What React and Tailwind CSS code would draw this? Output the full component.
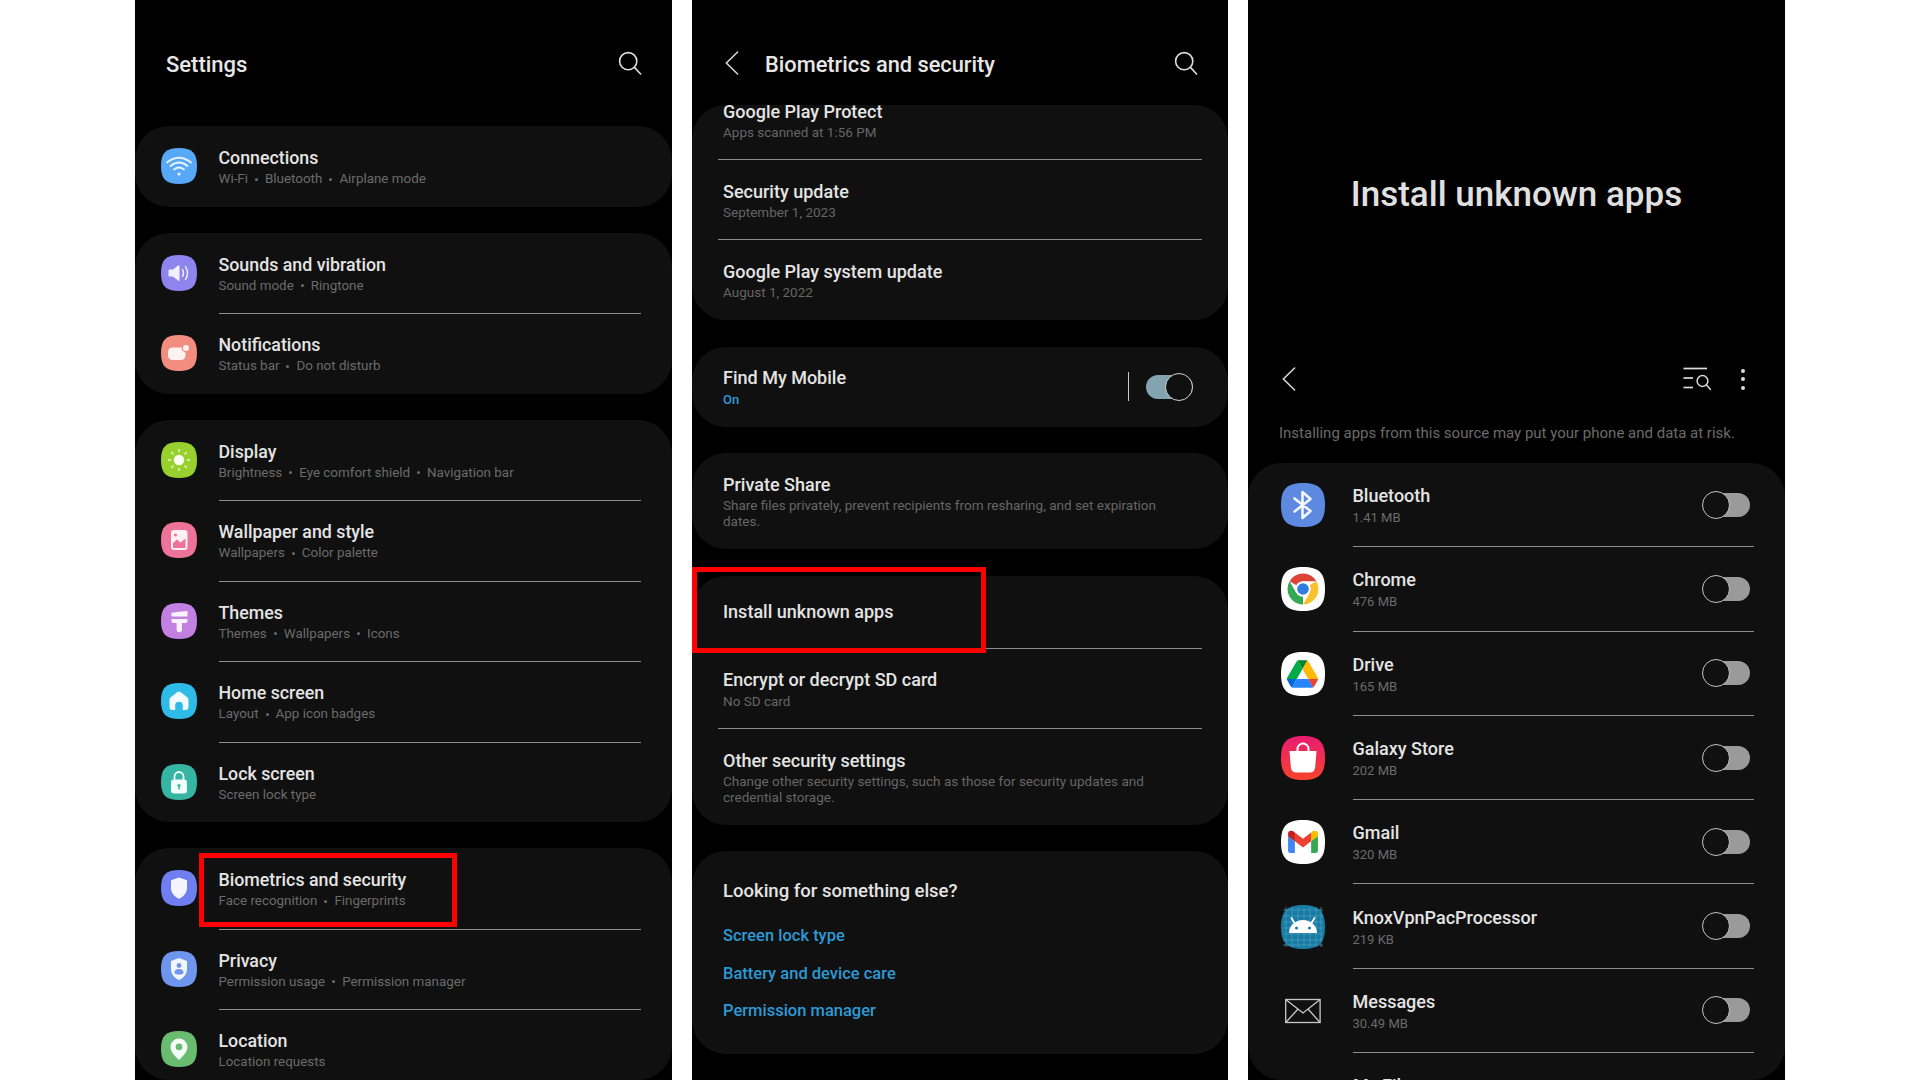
import React from "react";

// squircle used behind every app icon
const SQUIRCLE = "M18 0C31 0 36 5 36 18C36 31 31 36 18 36C5 36 0 31 0 18C0 5 5 0 18 0Z";

const Icon36 = ({ color, children }) => (
  <svg viewBox="0 0 36 36" className="w-[36px] h-[36px] shrink-0">
    <path d={SQUIRCLE} fill={color} />
    {children}
  </svg>
);

const Icon44 = ({ fill, children }) => (
  <svg viewBox="0 0 44 44" className="w-[44px] h-[44px] shrink-0">
    <path d="M22 0C38 0 44 6 44 22C44 38 38 44 22 44C6 44 0 38 0 22C0 6 6 0 22 0Z" fill={fill} />
    {children}
  </svg>
);

const WifiIcon = () => (
  <Icon36 color="#58a8f8">
    <g fill="none" stroke="#e8f3ff" strokeWidth="1.8" strokeLinecap="round">
      <path d="M6 14.5Q18 5 30 14.5" />
      <path d="M9.5 18Q18 11 26.5 18" />
      <path d="M13 21.5Q18 17.5 23 21.5" />
    </g>
    <circle cx="18" cy="26" r="1.6" fill="#e8f3ff" />
  </Icon36>
);

const SoundIcon = () => (
  <Icon36 color="#8e84ee">
    <path d="M7.5 15.5Q7.5 14.5 8.5 14.5H12L17 10.5Q18.5 9.5 18.5 11.5V25Q18.5 26.5 17 25.5L12 21.5H8.5Q7.5 21.5 7.5 20.5Z" fill="#f2f0ff" />
    <g fill="none" stroke="#f2f0ff" strokeWidth="1.4" strokeLinecap="round">
      <path d="M21.5 14.5Q23.5 18 21.5 21.5" />
      <path d="M24.5 11.5Q28.5 18 24.5 24.5" />
    </g>
  </Icon36>
);

const NotifIcon = () => (
  <Icon36 color="#f28d80">
    <rect x="7" y="12.5" width="17.5" height="12.5" rx="4.5" fill="#fff3f1" />
    <circle cx="25" cy="13" r="4.4" fill="#f28d80" />
    <circle cx="25" cy="13" r="3" fill="#fff3f1" />
  </Icon36>
);

const DisplayIcon = () => (
  <Icon36 color="#98d02e">
    <circle cx="18" cy="18" r="5.2" fill="#fbfff0" />
    <g stroke="#eaf8c8" strokeWidth="1.4" strokeLinecap="round">
      <path d="M18 7.5V9.5" />
      <path d="M18 26.5V28.5" />
      <path d="M7.5 18H9.5" />
      <path d="M26.5 18H28.5" />
      <path d="M10.6 10.6L12 12" />
      <path d="M24 24L25.4 25.4" />
      <path d="M25.4 10.6L24 12" />
      <path d="M12 24L10.6 25.4" />
    </g>
  </Icon36>
);

const WallpaperIcon = () => (
  <Icon36 color="#ee7398">
    <rect x="10" y="8" width="16.5" height="20" rx="3" fill="#fff0f4" />
    <circle cx="14.5" cy="13" r="1.6" fill="#ee7398" />
    <path d="M12 26V21L16 17.5L19.5 20.5L24.5 16.5V26Z" fill="#ee7398" />
  </Icon36>
);

const ThemesIcon = () => (
  <Icon36 color="#c180e2">
    <path d="M10.5 9.8Q18 8.8 26.5 8V13.5H10.5Z" fill="#fbf2ff" />
    <path d="M10.5 16H26.5V18Q26.5 20 24.5 20H21V26.5A2.7 2.7 0 0 1 15.6 26.5V20H12.5Q10.5 20 10.5 18Z" fill="#fbf2ff" />
  </Icon36>
);

const HomeIcon = () => (
  <Icon36 color="#2ebbe7">
    <path d="M16.2 9.2Q18 8 19.8 9.2L26.5 14.5Q27.5 15.3 27.5 17V24Q27.5 27 24.5 27H21.8V22.5A3.8 3.8 0 0 0 14.2 22.5V27H11.5Q8.5 27 8.5 24V17Q8.5 15.3 9.5 14.5Z" fill="#f2fcff" />
  </Icon36>
);

const LockIcon = () => (
  <Icon36 color="#36b5a2">
    <path d="M13.5 16V12.5A4.5 4.5 0 0 1 22.5 12.5V16" fill="none" stroke="#effffb" strokeWidth="1.8" />
    <rect x="10" y="15.5" width="16" height="14" rx="3" fill="#effffb" />
    <circle cx="18" cy="21.5" r="1.6" fill="#36b5a2" />
    <rect x="17.3" y="21.5" width="1.4" height="4" fill="#36b5a2" />
  </Icon36>
);

const BioIcon = () => (
  <Icon36 color="#6f7ff2">
    <path d="M18 7.5L26 10.2V18C26 23 22.5 26.8 18 28.8C13.5 26.8 10 23 10 18V10.2Z" fill="#f4f5ff" />
  </Icon36>
);

const PrivacyIcon = () => (
  <Icon36 color="#6f96ee">
    <path d="M18 7L26 10V18C26 23 22.5 27 18 29C13.5 27 10 23 10 18V10Z" fill="#f2f6ff" />
    <circle cx="18" cy="14.5" r="2.4" fill="#6f96ee" />
    <path d="M13.5 21.5Q13.5 18 18 18Q22.5 18 22.5 21.5Q22.5 23.5 18 23.5Q13.5 23.5 13.5 21.5Z" fill="#6f96ee" />
  </Icon36>
);

const LocationIcon = () => (
  <Icon36 color="#69bb6f">
    <path d="M18 7.5A8.5 8.5 0 0 1 26.5 16C26.5 21 21.5 25.5 18 29C14.5 25.5 9.5 21 9.5 16A8.5 8.5 0 0 1 18 7.5Z" fill="#f4fff5" />
    <circle cx="18" cy="15.8" r="3.4" fill="#69bb6f" />
  </Icon36>
);

const BluetoothIcon = () => (
  <Icon44 fill="#5d8ae0">
    <path d="M13.5 15.5L29.5 28L21.5 35V9L29.5 16L13.5 28.5" fill="none" stroke="#f3f6ff" strokeWidth="2.6" strokeLinejoin="round" strokeLinecap="round" />
  </Icon44>
);

const ChromeIcon = () => (
  <Icon44 fill="#ffffff">
    <path d="M8.6 14.25A15.5 15.5 0 0 1 35.4 14.25L22 14.25L22 22Z" fill="#db4437" />
    <path d="M35.4 14.25A15.5 15.5 0 0 1 22 37.5L28.7 25.9L22 22Z" fill="#fbc02d" />
    <path d="M22 37.5A15.5 15.5 0 0 1 8.6 14.25L15.3 25.9L22 22Z" fill="#34a853" />
    <circle cx="22" cy="22" r="7.7" fill="#ffffff" />
    <circle cx="22" cy="22" r="5.8" fill="#2f7de1" />
  </Icon44>
);

const DriveIcon = () => (
  <Icon44 fill="#ffffff">
    <svg x="6" y="8" width="31" height="28" viewBox="0 0 87.3 78">
      <path d="m6.6 66.85 3.85 6.65c.8 1.4 1.95 2.5 3.3 3.3l13.75-23.8h-27.5c0 1.55.4 3.1 1.2 4.5z" fill="#0066da" />
      <path d="m43.65 25-13.75-23.8c-1.35.8-2.5 1.9-3.3 3.3l-25.4 44a9.06 9.06 0 0 0 -1.2 4.5h27.5z" fill="#00ac47" />
      <path d="m73.55 76.8c1.35-.8 2.5-1.9 3.3-3.3l1.6-2.75 7.65-13.25c.8-1.4 1.2-2.95 1.2-4.5h-27.502l5.852 11.5z" fill="#ea4335" />
      <path d="m43.65 25 13.75-23.8c-1.35-.8-2.9-1.2-4.5-1.2h-18.5c-1.6 0-3.15.45-4.5 1.2z" fill="#00832d" />
      <path d="m59.8 53h-32.3l-13.75 23.8c1.35.8 2.9 1.2 4.5 1.2h50.8c1.6 0 3.15-.45 4.5-1.2z" fill="#2684fc" />
      <path d="m73.4 26.5-12.7-22c-.8-1.4-1.95-2.5-3.3-3.3l-13.75 23.8 16.15 28h27.45c0-1.55-.4-3.1-1.2-4.5z" fill="#ffba00" />
    </svg>
  </Icon44>
);

const StoreIcon = () => (
  <svg viewBox="0 0 44 44" className="w-[44px] h-[44px] shrink-0">
    <defs>
      <linearGradient id="storeGrad" x1="0" y1="0" x2="0" y2="1">
        <stop offset="0" stopColor="#e91c72" />
        <stop offset="1" stopColor="#f6432c" />
      </linearGradient>
    </defs>
    <path d="M22 0C38 0 44 6 44 22C44 38 38 44 22 44C6 44 0 38 0 22C0 6 6 0 22 0Z" fill="url(#storeGrad)" />
    <path d="M16.5 15V13A5.5 5.5 0 0 1 27.5 13V15" fill="none" stroke="#fff" strokeWidth="2" />
    <path d="M8.5 15H35.5L34.2 31Q33.8 36.5 28.5 36.5H15.5Q10.2 36.5 9.8 31Z" fill="#fff" />
  </svg>
);

const GmailIcon = () => (
  <Icon44 fill="#ffffff">
    <svg x="7" y="10.5" width="30" height="22.5" viewBox="0 0 256 193">
      <path d="M58.182 192.05V93.14L27.507 65.077 0 49.504v125.091c0 9.658 7.825 17.455 17.455 17.455h40.727Z" fill="#4285f4" />
      <path d="M197.818 192.05h40.727c9.659 0 17.455-7.826 17.455-17.455V49.505l-31.156 17.837-27.026 25.798v98.91Z" fill="#34a853" />
      <path d="m58.182 93.14-4.174-38.647 4.174-36.989L128 69.868l69.818-52.364 4.669 34.992-4.669 40.644L128 145.504z" fill="#ea4335" />
      <path d="M197.818 17.504V93.14L256 49.504V26.231c0-21.585-24.64-33.89-41.89-20.945l-16.292 12.218Z" fill="#fbbc04" />
      <path d="M0 49.504l26.759 20.07L58.182 93.14V17.504L41.89 5.286C24.61-7.66 0 4.646 0 26.23v23.273Z" fill="#c5221f" />
    </svg>
  </Icon44>
);

const KnoxIcon = () => (
  <Icon44 fill="#177ba3">
    <g stroke="#4f9dbd" strokeWidth="0.7">
      {[5, 11, 17, 23, 29, 35, 40].map((v) => (
        <React.Fragment key={v}>
          <path d={`M${v} 2V42`} />
          <path d={`M2 ${v}H42`} />
        </React.Fragment>
      ))}
    </g>
    <path d="M8 28A14 13 0 0 1 36 28Z" fill="#fff" />
    <path d="M13.5 18L10.5 13" stroke="#fff" strokeWidth="1.8" strokeLinecap="round" />
    <path d="M30.5 18L33.5 13" stroke="#fff" strokeWidth="1.8" strokeLinecap="round" />
    <circle cx="15.5" cy="23" r="1.5" fill="#177ba3" />
    <circle cx="28.5" cy="23" r="1.5" fill="#177ba3" />
  </Icon44>
);

const MessagesIcon = () => (
  <svg viewBox="0 0 44 44" className="w-[44px] h-[44px] shrink-0">
    <g fill="none" stroke="#c9c9c9" strokeWidth="1.3">
      <rect x="4.7" y="10.5" width="34.4" height="23" />
      <path d="M4.7 10.5L22 24L39.1 10.5" />
      <path d="M4.7 33.5L17 20" />
      <path d="M39.1 33.5L27 20" />
    </g>
  </svg>
);

const SearchIcon = () => (
  <svg viewBox="0 0 24 24" className="w-[24px] h-[24px]" fill="none" stroke="#dcdcdc" strokeWidth="1.6" strokeLinecap="round">
    <circle cx="10.2" cy="10.2" r="8.6" />
    <path d="M16.4 16.4L22.6 23" />
  </svg>
);

const BackIcon = () => (
  <svg viewBox="0 0 14 24" className="w-[14px] h-[24px]" fill="none" stroke="#d4d4d4" strokeWidth="1.6" strokeLinecap="round">
    <path d="M12.6 1L1.4 12L12.6 23" />
  </svg>
);

const ListSearchIcon = () => (
  <svg viewBox="0 0 28 24" className="w-[28px] h-[24px]" fill="none" stroke="#dcdcdc" strokeWidth="1.7">
    <path d="M0.5 1.5H24" />
    <path d="M0.5 11H10" />
    <path d="M0.5 20.5H10" />
    <circle cx="19.5" cy="14" r="5.4" strokeWidth="1.5" />
    <path d="M23.5 18L27.5 22.5" strokeWidth="1.5" strokeLinecap="round" />
  </svg>
);

const Toggle = ({ on }) => (
  <div className={on ? "relative w-[47px] h-[24px] rounded-full bg-[#84a3b1]" : "relative w-[46px] h-[24px] rounded-full bg-[#9a9a9a]"}>
    <div
      className={
        on
          ? "absolute right-0 top-[-2px] w-[28px] h-[28px] rounded-full bg-[#101010] border-[1.5px] border-[#d2d2d2]"
          : "absolute left-[-2px] top-[-2px] w-[28px] h-[28px] rounded-full bg-[#101010] border-[1.5px] border-[#c4c4c4]"
      }
    />
  </div>
);

const Sub = ({ parts }) => (
  <p className="text-[13.4px] leading-[18px] text-[#6b6b6b] whitespace-nowrap">
    {parts.map((part, i) => (
      <span key={part}>
        {i > 0 && <span className="inline-block mx-[7px] w-[3px] h-[3px] rounded-full bg-[#6b6b6b] align-middle" />}
        {part}
      </span>
    ))}
  </p>
);

const SettingsRow = ({ icon, title, parts, last }) => (
  <div className="h-[80.5px] flex items-center pl-[26px]">
    {icon}
    <div className={last ? "ml-[21.5px] mr-[31px] flex-1 self-start h-[80px] pt-[20px]" : "ml-[21.5px] mr-[31px] flex-1 self-start h-[81.5px] pt-[20px] border-b border-[#8c8c8c]"}>
      <p className="text-[17.8px] leading-[24px] font-medium text-[#e4e4e4]">{title}</p>
      <Sub parts={parts} />
    </div>
  </div>
);

const SecRow = ({ title, sub, last, className }) => (
  <div className={className}>
    <div className={last ? "mx-[26px] h-full pl-[5px] pt-[19.5px]" : "mx-[26px] h-full pl-[5px] pt-[19.5px] border-b border-[#8c8c8c]"}>
      <p className="text-[18px] leading-[24px] font-medium text-[#e4e4e4] whitespace-nowrap">{title}</p>
      {sub && <p className="text-[13.5px] leading-[16px] mt-[0.5px] text-[#666666] whitespace-pre">{sub}</p>}
    </div>
  </div>
);

const apps = [
  { name: "Bluetooth", size: "1.41 MB", icon: <BluetoothIcon /> },
  { name: "Chrome", size: "476 MB", icon: <ChromeIcon /> },
  { name: "Drive", size: "165 MB", icon: <DriveIcon /> },
  { name: "Galaxy Store", size: "202 MB", icon: <StoreIcon /> },
  { name: "Gmail", size: "320 MB", icon: <GmailIcon /> },
  { name: "KnoxVpnPacProcessor", size: "219 KB", icon: <KnoxIcon /> },
  { name: "Messages", size: "30.49 MB", icon: <MessagesIcon /> },
];

const AppRow = ({ app }) => (
  <div className="h-[84.3px] flex items-center pl-[33px]">
    {app.icon}
    <div className="ml-[27.5px] mr-[31px] flex-1 h-full border-b border-[#8c8c8c] flex items-center justify-between pr-[4px]">
      <div className="pt-[3px]">
        <p className="text-[18px] leading-[24px] font-medium text-[#e4e4e4]">{app.name}</p>
        <p className="text-[13px] leading-[20px] text-[#6b6b6b]">{app.size}</p>
      </div>
      <Toggle />
    </div>
  </div>
);

export default function App() {
  return (
    <div className="relative w-full h-[1080px] overflow-hidden bg-white flex justify-center gap-[20px] font-['Roboto',sans-serif]">
      {/* Settings */}
      <div className="relative w-[537px] h-[1080px] bg-black overflow-hidden">
        <div className="h-[126px] flex justify-between pl-[31px] pr-[30px] pt-[48px]">
          <h1 className="text-[22px] leading-[34px] font-medium text-[#e6e6e6]">Settings</h1>
          <div className="mt-[3px]"><SearchIcon /></div>
        </div>
        <div className="flex flex-col gap-[26px]">
          <div className="bg-[#101010] rounded-[34px]">
            <SettingsRow icon={<WifiIcon />} title="Connections" parts={["Wi-Fi", "Bluetooth", "Airplane mode"]} last />
          </div>
          <div className="bg-[#101010] rounded-[34px]">
            <SettingsRow icon={<SoundIcon />} title="Sounds and vibration" parts={["Sound mode", "Ringtone"]} />
            <SettingsRow icon={<NotifIcon />} title="Notifications" parts={["Status bar", "Do not disturb"]} last />
          </div>
          <div className="bg-[#101010] rounded-[34px]">
            <SettingsRow icon={<DisplayIcon />} title="Display" parts={["Brightness", "Eye comfort shield", "Navigation bar"]} />
            <SettingsRow icon={<WallpaperIcon />} title="Wallpaper and style" parts={["Wallpapers", "Color palette"]} />
            <SettingsRow icon={<ThemesIcon />} title="Themes" parts={["Themes", "Wallpapers", "Icons"]} />
            <SettingsRow icon={<HomeIcon />} title="Home screen" parts={["Layout", "App icon badges"]} />
            <SettingsRow icon={<LockIcon />} title="Lock screen" parts={["Screen lock type"]} last />
          </div>
          <div className="bg-[#101010] rounded-[34px] h-[232px] overflow-hidden">
            <SettingsRow icon={<BioIcon />} title="Biometrics and security" parts={["Face recognition", "Fingerprints"]} />
            <SettingsRow icon={<PrivacyIcon />} title="Privacy" parts={["Permission usage", "Permission manager"]} />
            <SettingsRow icon={<LocationIcon />} title="Location" parts={["Location requests"]} last />
          </div>
        </div>
        <div className="absolute left-[64px] top-[853px] w-[258px] h-[74px] border-[5px] border-[#ff0000]" />
      </div>

      {/* Biometrics and security */}
      <div className="relative w-[536px] h-[1080px] bg-black overflow-hidden">
        <div className="h-[105px] flex items-start pl-[33px] pr-[30px] pt-[48px]">
          <div className="mt-[3px]"><BackIcon /></div>
          <h1 className="ml-[26px] flex-1 text-[21.8px] leading-[34px] font-medium text-[#e6e6e6]">Biometrics and security</h1>
          <div className="mt-[3px]"><SearchIcon /></div>
        </div>
        <div className="flex flex-col gap-[26.5px]">
          <div className="bg-[#101010] rounded-[34px] h-[215px] overflow-hidden">
            <SecRow className="h-[80px] -mt-[25px]" title="Google Play Protect" sub="Apps scanned at 1:56 PM" />
            <SecRow className="h-[80px]" title="Security update" sub="September 1, 2023" />
            <SecRow className="h-[80px]" title="Google Play system update" sub="August 1, 2022" last />
          </div>
          <div className="bg-[#101010] rounded-[34px] h-[80px] flex items-center justify-between pl-[31px] pr-[35px]">
            <div className="pt-[3px]">
              <p className="text-[18px] leading-[24px] font-medium text-[#e4e4e4]">Find My Mobile</p>
              <p className="text-[13px] leading-[20px] font-medium text-[#2f9bdc]">On</p>
            </div>
            <div className="flex items-center gap-[17px]">
              <div className="w-px h-[29px] bg-[#c8c8c8]" />
              <Toggle on />
            </div>
          </div>
          <div className="bg-[#101010] rounded-[34px] h-[96px]">
            <SecRow className="h-full" title="Private Share" sub={"Share files privately, prevent recipients from resharing, and set expiration\ndates."} last />
          </div>
          <div className="bg-[#101010] rounded-[34px] h-[249px] overflow-hidden">
            <div className="h-[73px] mx-[26px] pl-[5px] border-b border-[#8c8c8c] flex items-center">
              <p className="text-[18px] leading-[24px] font-medium text-[#e4e4e4]">Install unknown apps</p>
            </div>
            <SecRow className="h-[80.5px]" title="Encrypt or decrypt SD card" sub="No SD card" />
            <SecRow className="h-[95.5px]" title="Other security settings" sub={"Change other security settings, such as those for security updates and\ncredential storage."} last />
          </div>
          <div className="bg-[#101010] rounded-[34px] h-[202.5px] pl-[31px] pt-[28px]">
            <p className="text-[18.5px] leading-[24px] font-medium text-[#e4e4e4]">Looking for something else?</p>
            <div className="mt-[21px] flex flex-col gap-[13.5px] text-[16.5px] leading-[24px] font-medium text-[#2c9ad6]">
              <p>Screen lock type</p>
              <p>Battery and device care</p>
              <p>Permission manager</p>
            </div>
          </div>
        </div>
        <div className="absolute left-[0px] top-[567px] w-[294px] h-[86px] border-[5px] border-[#ff0000]" />
      </div>

      {/* Install unknown apps */}
      <div className="w-[537px] h-[1080px] bg-black overflow-hidden">
        <div className="h-[349px] pt-[170px] text-center text-[35px] leading-[50px] font-medium text-[#e0e0e0]">Install unknown apps</div>
        <div className="h-[60px] flex items-center justify-between pl-[34px] pr-[40px]">
          <BackIcon />
          <div className="flex items-center gap-[30px]">
            <ListSearchIcon />
            <div className="flex flex-col gap-[4.5px]">
              <div className="w-[4px] h-[4px] rounded-full bg-[#dcdcdc]" />
              <div className="w-[4px] h-[4px] rounded-full bg-[#dcdcdc]" />
              <div className="w-[4px] h-[4px] rounded-full bg-[#dcdcdc]" />
            </div>
          </div>
        </div>
        <p className="h-[54px] pl-[31px] pt-[13.5px] text-[15px] leading-[20px] text-[#6b6b6b] whitespace-nowrap">
          Installing apps from this source may put your phone and data at risk.
        </p>
        <div className="bg-[#101010] rounded-[34px] h-[617px] overflow-hidden">
          {apps.map((app) => (
            <AppRow key={app.name} app={app} />
          ))}
          <div className="pl-[105px] pt-[21px] text-[18px] leading-[24px] font-medium text-[#e4e4e4]">My Files</div>
        </div>
      </div>
    </div>
  );
}
